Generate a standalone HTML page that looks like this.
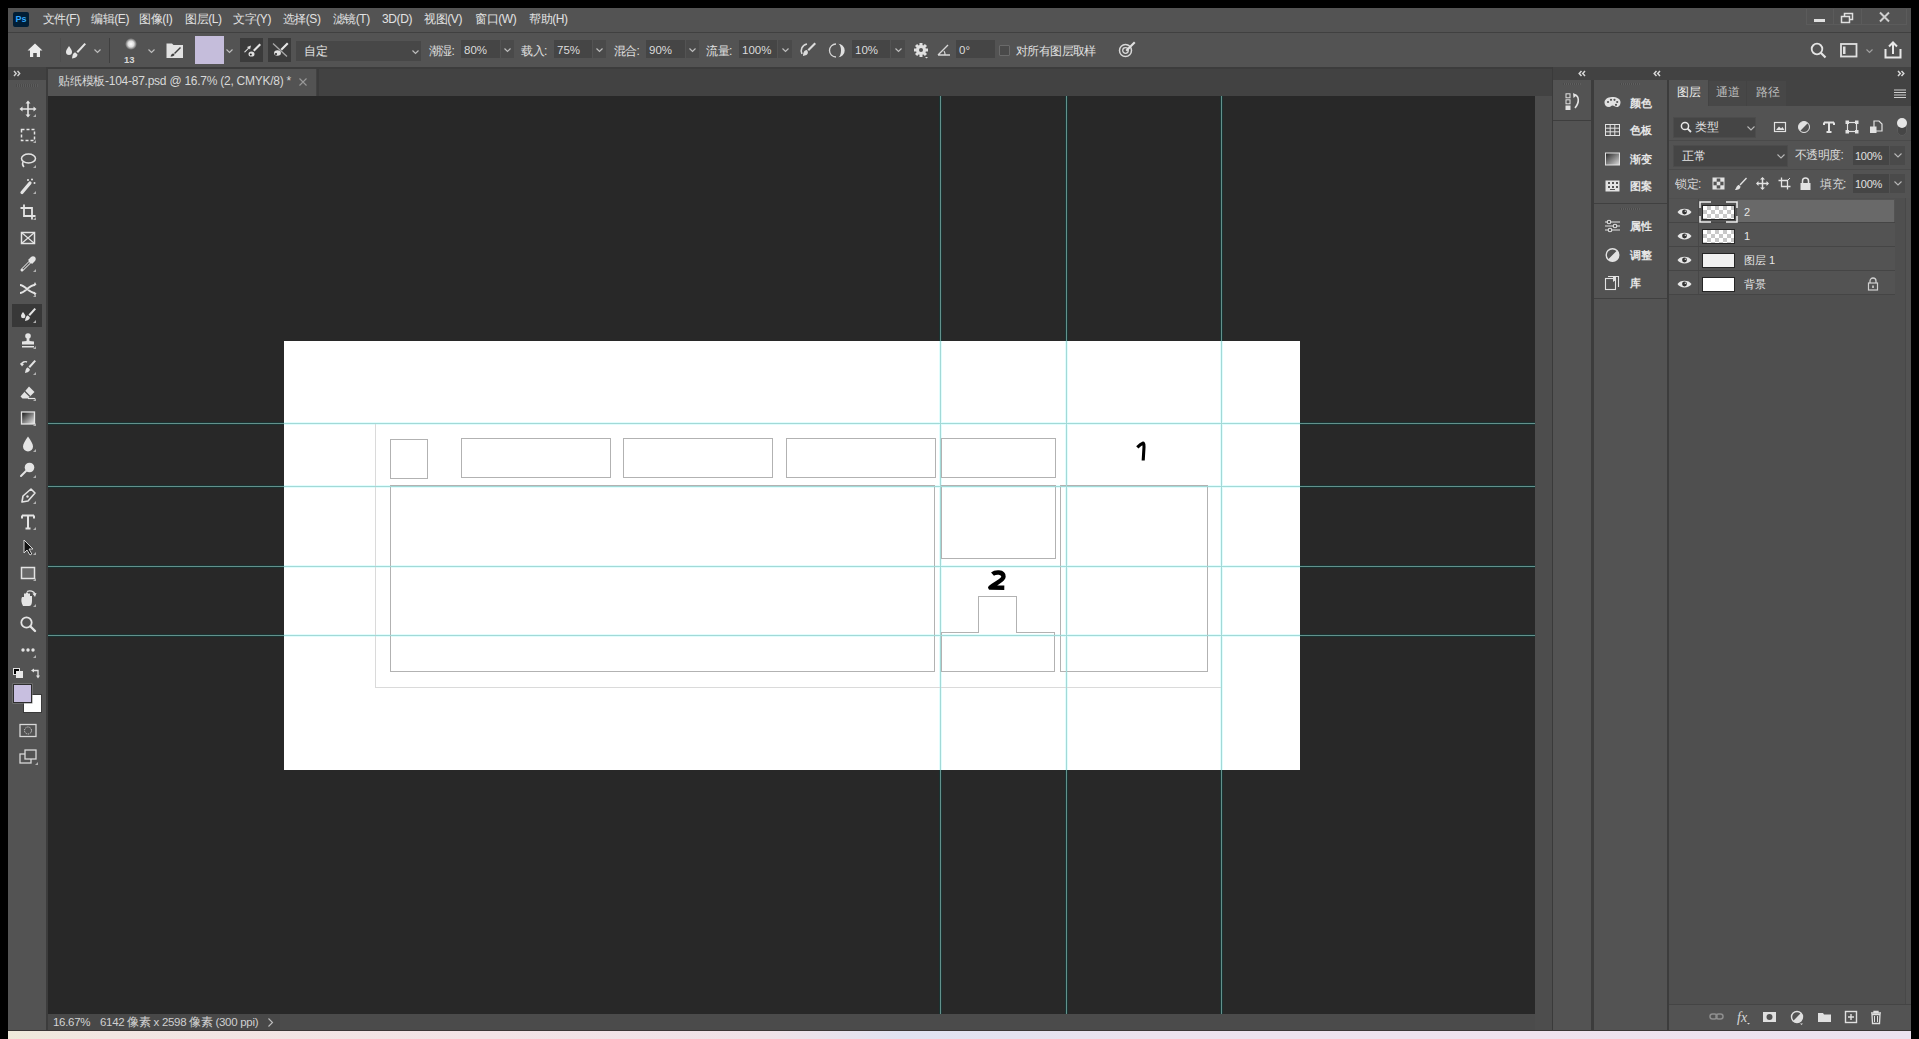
<!DOCTYPE html>
<html><head><meta charset="utf-8">
<style>
*{margin:0;padding:0;box-sizing:border-box}
html,body{width:1919px;height:1039px;overflow:hidden;background:#000;font-family:"Liberation Sans",sans-serif;color:#dcdcdc}
.a{position:absolute}
svg{position:absolute;overflow:visible}
.t{position:absolute;white-space:nowrap;font-size:12px;line-height:14px}
</style></head><body>
<!-- frame -->
<div class="a" style="left:8px;top:8px;width:1903px;height:1023px;background:#535353"></div>
<!-- bottom wallpaper strip -->
<div class="a" style="left:8px;top:1031px;width:1903px;height:8px;background:linear-gradient(90deg,#efeadb 0%,#f2e6e2 5%,#f3e3e6 25%,#f0e2e8 40%,#e0e2f1 47%,#e4e2f0 53%,#ece2ee 60%,#efe2ee 80%,#ebe2f0 100%)"></div>

<!-- menu bar -->
<div id="menubar" class="a" style="left:8px;top:8px;width:1903px;height:24px;background:#535353"></div>
<div class="a" style="left:8px;top:32px;width:1903px;height:1px;background:#404040"></div>
<!-- options bar -->
<div id="optbar" class="a" style="left:8px;top:33px;width:1903px;height:34px;background:#535353"></div>
<div class="a" style="left:8px;top:67px;width:1903px;height:2px;background:#3c3c3c"></div>

<!-- menu -->
<div class="a" style="left:13px;top:12px;width:16px;height:15px;background:#001e36;border-radius:2px;"></div><div class="t" style="left:14px;top:13px;width:14px;font-size:9px;line-height:13px;font-weight:bold;color:#31a8ff;text-align:center">Ps</div>
<div class="t" style="left:42.5px;top:12px;color:#e2e2e2;font-size:12px;letter-spacing:-0.4px">文件(F)</div>
<div class="t" style="left:91px;top:12px;color:#e2e2e2;font-size:12px;letter-spacing:-0.4px">编辑(E)</div>
<div class="t" style="left:139px;top:12px;color:#e2e2e2;font-size:12px;letter-spacing:-0.4px">图像(I)</div>
<div class="t" style="left:185px;top:12px;color:#e2e2e2;font-size:12px;letter-spacing:-0.4px">图层(L)</div>
<div class="t" style="left:233px;top:12px;color:#e2e2e2;font-size:12px;letter-spacing:-0.4px">文字(Y)</div>
<div class="t" style="left:282.5px;top:12px;color:#e2e2e2;font-size:12px;letter-spacing:-0.4px">选择(S)</div>
<div class="t" style="left:332.5px;top:12px;color:#e2e2e2;font-size:12px;letter-spacing:-0.4px">滤镜(T)</div>
<div class="t" style="left:382px;top:12px;color:#e2e2e2;font-size:12px;letter-spacing:-0.4px">3D(D)</div>
<div class="t" style="left:424px;top:12px;color:#e2e2e2;font-size:12px;letter-spacing:-0.4px">视图(V)</div>
<div class="t" style="left:475px;top:12px;color:#e2e2e2;font-size:12px;letter-spacing:-0.4px">窗口(W)</div>
<div class="t" style="left:529px;top:12px;color:#e2e2e2;font-size:12px;letter-spacing:-0.4px">帮助(H)</div>
<div class="a" style="left:1806px;top:9px;width:101px;height:16px;border:1px solid #5b5b5b;border-top:none"></div>
<div class="a" style="left:1833px;top:9px;width:1px;height:15px;background:#5b5b5b"></div>
<div class="a" style="left:1861px;top:9px;width:1px;height:15px;background:#5b5b5b"></div>
<div class="a" style="left:1814px;top:19px;width:11px;height:3px;background:#e0e0e0"></div>
<svg style="left:1840px;top:12px" width="14" height="12"><rect x="4.5" y="1.5" width="8" height="6" fill="none" stroke="#e0e0e0" stroke-width="1.5"/><rect x="1.5" y="4.5" width="8" height="6" fill="#535353" stroke="#e0e0e0" stroke-width="1.5"/></svg>
<svg style="left:1879px;top:12px" width="11" height="10"><path d="M1,0.5 L10,9.5 M10,0.5 L1,9.5" stroke="#d0d0d0" stroke-width="2"/></svg>
<!-- options bar -->
<svg style="left:27px;top:43px" width="16" height="15"><path d="M8,0.5 L15.5,7.5 L13,7.5 L13,14 L9.8,14 L9.8,10 L6.2,10 L6.2,14 L3,14 L3,7.5 L0.5,7.5 Z" fill="#ececec"/></svg>
<div class="a" style="left:60px;top:38px;width:1px;height:24px;background:#4d4d4d"></div>
<svg style="left:65px;top:42px" width="22" height="18"><path d="M4,4 C2,7 1,8.5 1,10 A3,3 0 0 0 7,10 C7,8.5 6,7 4,4Z" fill="#e6e6e6"/><path d="M19.5,1 L21,2.3 L13,11 L11.5,9.5 Z" fill="#e6e6e6"/><path d="M10.5,10.5 C8,10.5 7.5,13 7,16.5 C10,16 12.5,15 12.5,12.5 Z" fill="#e6e6e6"/></svg>
<svg style="left:94.0px;top:49px" width="7" height="4"><polyline points="0.5,0.5 3.5,3.5 6.5,0.5" fill="none" stroke="#bdbdbd" stroke-width="1.2"/></svg><div class="a" style="left:109px;top:38px;width:1px;height:25px;background:#3f3f3f"></div>
<div class="a" style="left:125px;top:38px;width:12px;height:12px;border-radius:50%;background:radial-gradient(circle,#ffffff 0%,#dddddd 35%,rgba(83,83,83,0) 70%)"></div>
<div class="t" style="left:124px;top:55px;font-size:9.5px;line-height:10px;color:#d8d8d8;font-weight:bold">13</div>
<svg style="left:147.5px;top:49px" width="7" height="4"><polyline points="0.5,0.5 3.5,3.5 6.5,0.5" fill="none" stroke="#bdbdbd" stroke-width="1.2"/></svg><svg style="left:166px;top:42px" width="18" height="17"><path d="M0.5,1.5 L6,1.5 L7.5,3 L17,3 L17,16 L0.5,16 Z" fill="#e2e2e2"/><path d="M14,5 L15,6 L9,12 L8,11Z" fill="#404040"/><path d="M7.5,11.5 C5.5,11.5 5,13 4.5,14.5 C6.5,14.5 8.5,14 8.5,12.5Z" fill="#404040"/></svg>
<div class="a" style="left:195px;top:36px;width:29px;height:28px;background:#c5bddb"></div>
<svg style="left:226.0px;top:49px" width="7" height="4"><polyline points="0.5,0.5 3.5,3.5 6.5,0.5" fill="none" stroke="#bdbdbd" stroke-width="1.2"/></svg><div class="a" style="left:240px;top:38px;width:23px;height:24px;background:#3b3b3b"></div>
<svg style="left:242px;top:42px" width="20" height="16"><path d="M2,10 L6,6 L5,5 L9,3.5 L8,7.5 L7,6.5 L3,10.5Z" fill="#e0e0e0"/><path d="M17.5,1.5 L19,3 L12.5,9.5 L11,8Z" fill="#e6e6e6"/><ellipse cx="9.5" cy="12" rx="3" ry="2.6" fill="#e0e0e0"/><circle cx="8.8" cy="12.5" r="1" fill="#222"/></svg>
<div class="a" style="left:268px;top:38px;width:23px;height:24px;background:#3b3b3b"></div>
<svg style="left:270px;top:42px" width="20" height="16"><path d="M3,1.5 L17,14.5" stroke="#a8a8a8" stroke-width="1.3"/><path d="M17,0.5 L18.5,2 L12,8.5 L10.5,7Z" fill="#e6e6e6"/><ellipse cx="7.5" cy="11" rx="3.4" ry="2.8" fill="#e0e0e0"/><circle cx="6" cy="12" r="1" fill="#222"/></svg>
<div class="a" style="left:296px;top:41px;width:125px;height:20px;background:#474747"></div>
<div class="t" style="left:304px;top:44px;color:#e4e4e4">自定</div>
<svg style="left:411.5px;top:49.5px" width="7" height="4"><polyline points="0.5,0.5 3.5,3.5 6.5,0.5" fill="none" stroke="#bdbdbd" stroke-width="1.2"/></svg><div class="t" style="left:428.5px;top:44px;color:#e0e0e0;letter-spacing:-0.5px">潮湿:</div>
<div class="a" style="left:461px;top:40px;width:39px;height:18px;background:#454545"></div>
<div class="a" style="left:501px;top:40px;width:13px;height:18px;background:#4a4a4a"></div>
<div class="t" style="left:464px;top:43px;color:#dcdcdc;font-size:11.5px">80%</div>
<svg style="left:504.0px;top:48px" width="7" height="4"><polyline points="0.5,0.5 3.5,3.5 6.5,0.5" fill="none" stroke="#bdbdbd" stroke-width="1.2"/></svg><div class="t" style="left:521px;top:44px;color:#e0e0e0;letter-spacing:-0.5px">载入:</div>
<div class="a" style="left:554px;top:40px;width:38px;height:18px;background:#454545"></div>
<div class="a" style="left:593px;top:40px;width:13px;height:18px;background:#4a4a4a"></div>
<div class="t" style="left:557px;top:43px;color:#dcdcdc;font-size:11.5px">75%</div>
<svg style="left:596.0px;top:48px" width="7" height="4"><polyline points="0.5,0.5 3.5,3.5 6.5,0.5" fill="none" stroke="#bdbdbd" stroke-width="1.2"/></svg><div class="t" style="left:613.5px;top:44px;color:#e0e0e0;letter-spacing:-0.5px">混合:</div>
<div class="a" style="left:646px;top:40px;width:39px;height:18px;background:#454545"></div>
<div class="a" style="left:686px;top:40px;width:13px;height:18px;background:#4a4a4a"></div>
<div class="t" style="left:649px;top:43px;color:#dcdcdc;font-size:11.5px">90%</div>
<svg style="left:689.0px;top:48px" width="7" height="4"><polyline points="0.5,0.5 3.5,3.5 6.5,0.5" fill="none" stroke="#bdbdbd" stroke-width="1.2"/></svg><div class="t" style="left:706px;top:44px;color:#e0e0e0;letter-spacing:-0.5px">流量:</div>
<div class="a" style="left:739px;top:40px;width:38px;height:18px;background:#454545"></div>
<div class="a" style="left:778px;top:40px;width:14px;height:18px;background:#4a4a4a"></div>
<div class="t" style="left:742px;top:43px;color:#dcdcdc;font-size:11.5px">100%</div>
<svg style="left:781.5px;top:48px" width="7" height="4"><polyline points="0.5,0.5 3.5,3.5 6.5,0.5" fill="none" stroke="#bdbdbd" stroke-width="1.2"/></svg><svg style="left:799px;top:42px" width="18" height="16"><path d="M3,12 C1,8 3,3 8,2" fill="none" stroke="#d8d8d8" stroke-width="1.6"/><path d="M15.5,0.5 L17,2 L10,9 L8.5,7.5Z" fill="#dcdcdc"/><path d="M8,8 C5,8 4,11 4,14 L7.5,13 C9,12 9.5,10 8,8Z" fill="#dcdcdc"/></svg>
<svg style="left:829px;top:43px" width="16" height="16"><path d="M7,1 A6.5,6.5 0 0 0 7,14" fill="none" stroke="#d8d8d8" stroke-width="1.3"/><path d="M9,0.8 A6.6,6.6 0 0 1 9,14.2 A2.6,5.8 0 0 0 9,0.8Z" fill="#e0e0e0"/></svg>
<div class="a" style="left:852px;top:40px;width:38px;height:18px;background:#454545"></div>
<div class="a" style="left:891px;top:40px;width:14px;height:18px;background:#4a4a4a"></div>
<div class="t" style="left:855px;top:43px;color:#dcdcdc;font-size:11.5px">10%</div>
<svg style="left:894.5px;top:48px" width="7" height="4"><polyline points="0.5,0.5 3.5,3.5 6.5,0.5" fill="none" stroke="#bdbdbd" stroke-width="1.2"/></svg><svg style="left:913px;top:42px" width="17" height="17"><g fill="#e0e0e0"><circle cx="8" cy="8" r="5"/><rect x="6.5" y="1" width="3" height="14"/><rect x="1" y="6.5" width="14" height="3"/><rect x="6.5" y="1" width="3" height="14" transform="rotate(45 8 8)"/><rect x="6.5" y="1" width="3" height="14" transform="rotate(-45 8 8)"/></g><circle cx="8" cy="8" r="2" fill="#535353"/><path d="M12,15 L15,15 L13.5,16.5Z" fill="#e0e0e0"/></svg>
<svg style="left:937px;top:43px" width="15" height="13"><path d="M1,12 L13,12 M1,12 L11,2" stroke="#d8d8d8" stroke-width="1.4" fill="none"/><path d="M7,8 A6,6 0 0 1 8,12" stroke="#d8d8d8" stroke-width="1.2" fill="none"/></svg>
<div class="a" style="left:956px;top:40px;width:39px;height:18px;background:#454545"></div>
<div class="t" style="left:959px;top:43px;color:#dcdcdc;font-size:11.5px">0°</div>
<div class="a" style="left:999px;top:45px;width:11px;height:11px;border:1px solid #6a6a6a;background:#4a4a4a;border-radius:1px"></div>
<div class="t" style="left:1016px;top:44px;color:#e0e0e0;letter-spacing:-0.6px">对所有图层取样</div>
<svg style="left:1118px;top:41px" width="18" height="17"><circle cx="7.5" cy="9.5" r="6" fill="none" stroke="#d8d8d8" stroke-width="1.5"/><circle cx="7.5" cy="9.5" r="2.8" fill="none" stroke="#d8d8d8" stroke-width="1.3"/><path d="M16,0.5 L17.5,2 L9,10.5 L7.5,9Z" fill="#e0e0e0"/></svg>
<svg style="left:1810px;top:42px" width="17" height="17"><circle cx="7" cy="7" r="5.3" fill="none" stroke="#e4e4e4" stroke-width="1.8"/><path d="M10.8,10.8 L15.5,15.5" stroke="#e4e4e4" stroke-width="2.2"/></svg>
<svg style="left:1840px;top:43px" width="18" height="15"><rect x="1" y="1" width="15.5" height="12.5" fill="none" stroke="#e0e0e0" stroke-width="1.8"/><rect x="3" y="3.5" width="2.5" height="7.5" fill="#e0e0e0"/></svg>
<svg style="left:1866.0px;top:49px" width="7" height="4"><polyline points="0.5,0.5 3.5,3.5 6.5,0.5" fill="none" stroke="#a0a0a0" stroke-width="1.2"/></svg><svg style="left:1884px;top:41px" width="18" height="18"><path d="M1.5,8 L1.5,16.5 L16.5,16.5 L16.5,8" fill="none" stroke="#e8e8e8" stroke-width="2"/><path d="M9,13 L9,2 M5,5.5 L9,1.5 L13,5.5" fill="none" stroke="#e8e8e8" stroke-width="2"/></svg>

<!-- toolbar -->
<div class="a" style="left:8px;top:67px;width:38px;height:964px;background:#535353"></div>
<div class="a" style="left:8px;top:67px;width:38px;height:13px;background:#424242"></div>
<div class="a" style="left:46px;top:67px;width:2px;height:964px;background:#3c3c3c"></div>

<!-- tab bar -->
<div class="a" style="left:48px;top:69px;width:1505px;height:27px;background:#424242"></div><div class="a" style="left:317px;top:69px;width:2px;height:27px;background:#3b3b3b"></div>
<div class="a" style="left:48px;top:69px;width:268px;height:27px;background:#535353"></div>

<!-- canvas -->
<div id="canvas" class="a" style="left:48px;top:96px;width:1487px;height:918px;background:#282828;overflow:hidden"></div>
<!-- status bar -->
<div class="a" style="left:48px;top:1014px;width:1487px;height:16px;background:#4b4b4b"></div><div class="a" style="left:48px;top:1014px;width:232px;height:16px;background:#484848"></div>
<!-- v scrollbar strip -->
<div class="a" style="left:1535px;top:96px;width:17px;height:934px;background:#4d4d4d"></div>
<div class="a" style="left:1552px;top:67px;width:1px;height:964px;background:#3a3a3a"></div>

<!-- toolbar icons -->
<div class="a" style="left:12px;top:304px;width:30px;height:23px;background:#383838"></div>
<svg style="left:19.0px;top:100.0px" width="18" height="18"><g stroke="#e4e4e4" stroke-width="1.6" fill="none"><path d="M9,2 V16 M2,9 H16"/></g><g fill="#e4e4e4"><path d="M9,0.5 L11.5,3.5 L6.5,3.5Z"/><path d="M9,17.5 L11.5,14.5 L6.5,14.5Z"/><path d="M0.5,9 L3.5,6.5 L3.5,11.5Z"/><path d="M17.5,9 L14.5,6.5 L14.5,11.5Z"/></g><path d="M17,14 L17,17 L14,17Z" fill="#b0b0b0"/></svg>
<svg style="left:19.0px;top:125.5px" width="18" height="18"><rect x="2.5" y="3.5" width="13" height="11" fill="none" stroke="#e4e4e4" stroke-width="1.5" stroke-dasharray="3 2"/><path d="M17,14 L17,17 L14,17Z" fill="#b0b0b0"/></svg>
<svg style="left:19.0px;top:151.0px" width="18" height="18"><ellipse cx="9.5" cy="7.5" rx="7" ry="4.5" fill="none" stroke="#e4e4e4" stroke-width="1.5"/><path d="M4,11 C3,13 4,15 5,16" fill="none" stroke="#e4e4e4" stroke-width="1.5"/><path d="M17,14 L17,17 L14,17Z" fill="#b0b0b0"/></svg>
<svg style="left:19.0px;top:177.0px" width="18" height="18"><path d="M3,15.5 L11,6" stroke="#e4e4e4" stroke-width="3.2" stroke-linecap="round"/><circle cx="13" cy="2.5" r="1" fill="#e4e4e4"/><circle cx="15.5" cy="6" r="1" fill="#e4e4e4"/><circle cx="9" cy="3" r="1" fill="#e4e4e4"/><path d="M17,14 L17,17 L14,17Z" fill="#b0b0b0"/></svg>
<svg style="left:19.0px;top:203.0px" width="18" height="18"><path d="M5,1.5 V13 H16.5 M1.5,5 H13 V16.5" fill="none" stroke="#e4e4e4" stroke-width="1.8"/><path d="M17,14 L17,17 L14,17Z" fill="#b0b0b0"/></svg>
<svg style="left:19.0px;top:229.0px" width="18" height="18"><rect x="2.5" y="3.5" width="13" height="11" fill="none" stroke="#e4e4e4" stroke-width="1.5"/><path d="M2.5,3.5 L15.5,14.5 M15.5,3.5 L2.5,14.5" stroke="#e4e4e4" stroke-width="1.2"/></svg>
<svg style="left:19.0px;top:255.0px" width="18" height="18"><path d="M3,15 L11,7" stroke="#e4e4e4" stroke-width="3" stroke-linecap="round" fill="none"/><path d="M3.8,14.2 L10.5,7.5" stroke="#535353" stroke-width="1.2"/><path d="M10,4 L14,8 M12,2 C13,1 15,1 16,2 C17,3 17,5 16,6 L13,9 L9,5Z" fill="#e4e4e4"/><path d="M17,14 L17,17 L14,17Z" fill="#b0b0b0"/></svg>
<svg style="left:19.0px;top:280.0px" width="18" height="18"><path d="M1,5 C6,5 10,13 16,13 M1,13 C6,13 10,5 16,5" fill="none" stroke="#e4e4e4" stroke-width="1.8"/><path d="M16,2 L17.5,5 L14,6Z M16,16 L17.5,13 L14,12Z" fill="#e4e4e4"/><path d="M17,14 L17,17 L14,17Z" fill="#b0b0b0"/></svg>
<svg style="left:19.0px;top:306.0px" width="18" height="18"><path d="M4,6 C2.5,8 2,9 2,10 A2.2,2.2 0 0 0 6.4,10 C6.4,9 5.5,8 4,6Z" fill="#e4e4e4"/><path d="M15.5,2 L17,3.3 L11,10 L9.5,8.5 Z" fill="#e4e4e4"/><path d="M9,9.5 C7,9.5 6.5,12 6,15 C8.5,14.5 11,13.5 10.8,11.3 Z" fill="#e4e4e4"/><path d="M17,14 L17,17 L14,17Z" fill="#b0b0b0"/></svg>
<svg style="left:19.0px;top:332.0px" width="18" height="18"><circle cx="9" cy="4" r="2.8" fill="#e4e4e4"/><path d="M7.8,6 L10.2,6 L10.5,9 L15,9.5 L15,12.5 L3,12.5 L3,9.5 L7.5,9Z" fill="#e4e4e4"/><rect x="3" y="14" width="12" height="1.5" fill="#e4e4e4"/><path d="M17,14 L17,17 L14,17Z" fill="#b0b0b0"/></svg>
<svg style="left:19.0px;top:358.0px" width="18" height="18"><path d="M15.5,2 L17,3.3 L11,10 L9.5,8.5 Z" fill="#e4e4e4"/><path d="M9,9.5 C7,9.5 6.5,12 6,15 C8.5,14.5 11,13.5 10.8,11.3 Z" fill="#e4e4e4"/><path d="M2,7 C3,4 6,3 8,4" fill="none" stroke="#e4e4e4" stroke-width="1.4"/><path d="M1,5 L3,8.5 L5,6Z" fill="#e4e4e4"/><path d="M17,14 L17,17 L14,17Z" fill="#b0b0b0"/></svg>
<svg style="left:19.0px;top:384.0px" width="18" height="18"><path d="M10,2.5 L15.5,8 L9,14.5 L3.5,14.5 L1.5,12.5 Z" fill="#e4e4e4"/><path d="M5.5,7 L11,12.5" stroke="#535353" stroke-width="1.2"/><path d="M9,14.5 H16" stroke="#e4e4e4" stroke-width="1.2"/><path d="M17,14 L17,17 L14,17Z" fill="#b0b0b0"/></svg>
<svg style="left:19.0px;top:409.0px" width="18" height="18"><defs><linearGradient id="gr" x1="0" x2="1" y1="0" y2="1"><stop offset="0" stop-color="#111"/><stop offset="1" stop-color="#eee"/></linearGradient></defs><rect x="2.5" y="3" width="13" height="12" fill="url(#gr)" stroke="#e4e4e4" stroke-width="1.3"/><path d="M17,14 L17,17 L14,17Z" fill="#b0b0b0"/></svg>
<svg style="left:19.0px;top:435.0px" width="18" height="18"><path d="M9,1.5 C6,6 4,9 4,11.5 A5,5 0 0 0 14,11.5 C14,9 12,6 9,1.5Z" fill="#e4e4e4"/><path d="M17,14 L17,17 L14,17Z" fill="#b0b0b0"/></svg>
<svg style="left:19.0px;top:461.0px" width="18" height="18"><circle cx="10.5" cy="6.5" r="4.8" fill="#e4e4e4"/><path d="M7,10 L2,15" stroke="#e4e4e4" stroke-width="2" stroke-linecap="round"/><path d="M17,14 L17,17 L14,17Z" fill="#b0b0b0"/></svg>
<svg style="left:19.0px;top:487.0px" width="18" height="18"><path d="M12,2 L16,6 L9,14 L3,15 L4,9Z" fill="none" stroke="#e4e4e4" stroke-width="1.6" stroke-linejoin="round"/><circle cx="8.5" cy="9.5" r="1.2" fill="#e4e4e4"/><path d="M17,14 L17,17 L14,17Z" fill="#b0b0b0"/></svg>
<svg style="left:19.0px;top:513.0px" width="18" height="18"><path d="M3,2.5 H15 M9,2.5 V15.5 M6.5,15.5 H11.5 M3,2.5 V5.5 M15,2.5 V5.5" fill="none" stroke="#e4e4e4" stroke-width="2"/><path d="M17,14 L17,17 L14,17Z" fill="#b0b0b0"/></svg>
<svg style="left:19.0px;top:538.0px" width="18" height="18"><path d="M5,2 L5,15 L8,12 L11,17 L12.8,16 L10,11 L14,11Z" fill="#111" stroke="#e4e4e4" stroke-width="0.9"/><path d="M17,14 L17,17 L14,17Z" fill="#b0b0b0"/></svg>
<svg style="left:19.0px;top:564.0px" width="18" height="18"><rect x="2.5" y="3.5" width="13" height="11" fill="#6a6a6a" stroke="#e4e4e4" stroke-width="1.5"/><path d="M17,14 L17,17 L14,17Z" fill="#b0b0b0"/></svg>
<svg style="left:19.0px;top:590.0px" width="18" height="18"><path d="M4,16 C2,13 2,9 3,7 L5,7 L5,3.5 L7,3.5 L7,2.5 L9,2.5 L9,3.5 L11,3.5 L11,6 L13,6 L13,11 C13,14 12,16 10,16Z" fill="#e4e4e4"/><path d="M8,1.5 C11,0 15,1 16,4" fill="none" stroke="#e4e4e4" stroke-width="1.3"/><path d="M16,7 L17.5,3 L13.5,3.5Z" fill="#e4e4e4"/><path d="M17,14 L17,17 L14,17Z" fill="#b0b0b0"/></svg>
<svg style="left:19.0px;top:615.0px" width="18" height="18"><circle cx="7.5" cy="7.5" r="5.2" fill="none" stroke="#e4e4e4" stroke-width="1.8"/><path d="M11.5,11.5 L16,16" stroke="#e4e4e4" stroke-width="2.4" stroke-linecap="round"/></svg>
<svg style="left:19.0px;top:641.0px" width="18" height="18"><circle cx="4" cy="9" r="1.7" fill="#e4e4e4"/><circle cx="9" cy="9" r="1.7" fill="#e4e4e4"/><circle cx="14" cy="9" r="1.7" fill="#e4e4e4"/><path d="M17,14 L17,17 L14,17Z" fill="#b0b0b0"/></svg>
<svg style="left:13px;top:668px" width="30" height="14"><rect x="0.5" y="0.5" width="6" height="6" fill="#000" stroke="#e0e0e0" stroke-width="1"/><rect x="3.5" y="3.5" width="6" height="6" fill="#e8e8e8" stroke="#e8e8e8"/><path d="M20,2.5 H25 V8" fill="none" stroke="#e0e0e0" stroke-width="1.3"/><path d="M18,2.5 L21,0.5 L21,4.5Z M25,10.5 L23,7.5 L27,7.5Z" fill="#e0e0e0"/></svg>
<div class="a" style="left:23px;top:694px;width:19px;height:19px;background:#fff;border:1px solid #3a3a3a"></div>
<div class="a" style="left:13px;top:684px;width:19px;height:19px;background:#c8bfe0;border:1px solid #2e2e2e;box-shadow:0 0 0 0.5px #888"></div>
<svg style="left:19px;top:723px" width="18" height="16"><rect x="1" y="1.5" width="16" height="12" fill="none" stroke="#d8d8d8" stroke-width="1.3"/><circle cx="9" cy="7.5" r="3.5" fill="none" stroke="#d8d8d8" stroke-width="1" stroke-dasharray="1.2 1"/></svg>
<svg style="left:19px;top:749px" width="20" height="17"><rect x="1" y="5" width="11" height="9" fill="none" stroke="#d8d8d8" stroke-width="1.3"/><rect x="6" y="1" width="11" height="9" fill="#535353" stroke="#d8d8d8" stroke-width="1.3"/><path d="M19,13 L19,16 L16,16Z" fill="#b0b0b0"/></svg>
<!-- tab text -->
<div class="t" style="left:58px;top:74px;color:#d8d8d8;font-size:12px;letter-spacing:-0.25px">贴纸模板-104-87.psd @ 16.7% (2, CMYK/8) *</div>
<svg style="left:299px;top:78px" width="8" height="8"><path d="M0.5,0.5 L7.5,7.5 M7.5,0.5 L0.5,7.5" stroke="#9a9a9a" stroke-width="1.1"/></svg>
<svg style="left:13px;top:70px" width="9" height="7"><path d="M1,1 L3.2,3.5 L1,6 M4.5,1 L6.7,3.5 L4.5,6" fill="none" stroke="#d0d0d0" stroke-width="1.4"/></svg>
<div class="a" style="left:16px;top:84px;width:22px;height:3px;background:repeating-linear-gradient(90deg,#4a4a4a 0 1px,#5c5c5c 1px 2px)"></div>
<!-- status bar -->
<div class="t" style="left:53px;top:1015px;color:#d4d4d4;font-size:11.5px;line-height:14px;letter-spacing:-0.3px">16.67%</div>
<div class="t" style="left:100px;top:1015px;color:#d0d0d0;font-size:11.5px;line-height:14px;letter-spacing:-0.3px">6142 像素 x 2598 像素 (300 ppi)</div>
<svg style="left:268px;top:1018px" width="6" height="9"><path d="M0.5,0.5 L4.5,4.5 L0.5,8.5" fill="none" stroke="#bdbdbd" stroke-width="1.1"/></svg>

<!-- right columns -->
<div class="a" style="left:1553px;top:67px;width:358px;height:13px;background:#424242"></div>
<div class="a" style="left:1553px;top:80px;width:38px;height:951px;background:#535353"></div>
<div class="a" style="left:1591px;top:80px;width:3px;height:951px;background:#3c3c3c"></div>
<div class="a" style="left:1594px;top:80px;width:73px;height:951px;background:#535353"></div>
<div class="a" style="left:1667px;top:80px;width:2px;height:951px;background:#3c3c3c"></div>
<div class="a" style="left:1669px;top:80px;width:242px;height:951px;background:#535353"></div>


<!-- canvas content -->
<svg class="a" style="left:0;top:0" width="1919" height="1039" shape-rendering="crispEdges">
<defs><clipPath id="docclip"><rect x="284" y="341" width="1016" height="429"/></clipPath></defs>
 <g fill="#1a3332">
  <rect x="48" y="422" width="1487" height="3"/>
  <rect x="48" y="485" width="1487" height="3"/>
  <rect x="48" y="565" width="1487" height="3"/>
  <rect x="48" y="634" width="1487" height="3"/>
  <rect x="939" y="96" width="3" height="918"/>
  <rect x="1065" y="96" width="3" height="918"/>
  <rect x="1220" y="96" width="3" height="918"/>
 </g>
 <g fill="#63918c">
  <rect x="48" y="423" width="1487" height="1"/>
  <rect x="48" y="486" width="1487" height="1"/>
  <rect x="48" y="566" width="1487" height="1"/>
  <rect x="48" y="635" width="1487" height="1"/>
  <rect x="940" y="96" width="1" height="918"/>
  <rect x="1066" y="96" width="1" height="918"/>
  <rect x="1221" y="96" width="1" height="918"/>
 </g>
 <rect x="284" y="341" width="1016" height="429" fill="#fff"/>
 <g clip-path="url(#docclip)"><g>
 <g fill="#e2fdfd">
  <rect x="48" y="422" width="1487" height="3"/>
  <rect x="48" y="485" width="1487" height="3"/>
  <rect x="48" y="565" width="1487" height="3"/>
  <rect x="48" y="634" width="1487" height="3"/>
  <rect x="939" y="96" width="3" height="918"/>
  <rect x="1065" y="96" width="3" height="918"/>
  <rect x="1220" y="96" width="3" height="918"/>
 </g>
 </g></g>
 <g fill="none" stroke="#dadada" stroke-width="1">
  <rect x="375.5" y="423.5" width="846" height="264"/>
 </g>
 <g fill="none" stroke="#b2b2b2" stroke-width="1">
  <rect x="390.5" y="439.5" width="37" height="39"/>
  <rect x="461.5" y="438.5" width="149" height="39"/>
  <rect x="623.5" y="438.5" width="149" height="39"/>
  <rect x="786.5" y="438.5" width="149" height="39"/>
  <rect x="941.5" y="438.5" width="114" height="39"/>
  <rect x="390.5" y="485.5" width="544" height="186"/>
  <rect x="941.5" y="485.5" width="114" height="73"/>
  <path d="M941.5,671.5 V632.5 H978.5 V596.5 H1016.5 V632.5 H1054.5 V671.5 Z"/>
  <rect x="1060.5" y="485.5" width="147" height="186"/>
 </g>
 <g clip-path="url(#docclip)"><g>
 <g fill="#a2d9d7">
  <rect x="48" y="423" width="1487" height="1"/>
  <rect x="48" y="486" width="1487" height="1"/>
  <rect x="48" y="566" width="1487" height="1"/>
  <rect x="48" y="635" width="1487" height="1"/>
  <rect x="940" y="96" width="1" height="918"/>
  <rect x="1066" y="96" width="1" height="918"/>
  <rect x="1221" y="96" width="1" height="918"/>
 </g>
 </g></g>
</svg>
<svg class="a" style="left:0;top:0" width="1919" height="1039">
 <path d="M1137.3,447.3 Q1140.5,444 1143.3,443 Q1144.2,444 1144,447 L1143.2,460.5" fill="none" stroke="#000" stroke-width="3.1" stroke-linejoin="round" stroke-linecap="butt"/>
 <path d="M992.5,574.2 C995,572 1003.5,571 1003.5,576.8 C1003.5,580.5 995,583 990.3,587.6 L1004.3,587.8" fill="none" stroke="#000" stroke-width="4.4" stroke-linejoin="round"/>
</svg>
<!-- right panel content -->
<svg style="left:1577.5px;top:70.0px" width="9" height="7"><path d="M3.5,1 L1.2,3.5 L3.5,6 M7,1 L4.7,3.5 L7,6" fill="none" stroke="#d8d8d8" stroke-width="1.5"/></svg>
<svg style="left:1652.5px;top:70.0px" width="9" height="7"><path d="M3.5,1 L1.2,3.5 L3.5,6 M7,1 L4.7,3.5 L7,6" fill="none" stroke="#d8d8d8" stroke-width="1.5"/></svg>
<svg style="left:1896.5px;top:70.0px" width="9" height="7"><path d="M1,1 L3.3,3.5 L1,6 M4.5,1 L6.8,3.5 L4.5,6" fill="none" stroke="#d8d8d8" stroke-width="1.5"/></svg>
<div class="a" style="left:1553px;top:120px;width:38px;height:1px;background:#3e3e3e"></div>
<div class="a" style="left:1563px;top:83px;width:18px;height:2px;background:repeating-linear-gradient(90deg,#4a4a4a 0 1px,#5e5e5e 1px 2px)"></div>
<svg style="left:1565px;top:93px" width="18" height="18"><rect x="1" y="0.8" width="4" height="4" fill="none" stroke="#e2e2e2" stroke-width="1"/><rect x="1" y="6.8" width="4" height="4" fill="none" stroke="#e2e2e2" stroke-width="1"/><rect x="0.5" y="12.5" width="5" height="4.5" fill="#e2e2e2"/><path d="M9,2 C14,2 15,9 10,15" fill="none" stroke="#e2e2e2" stroke-width="1.6"/><path d="M8,0 L12,2 L8.5,5Z" fill="#e2e2e2"/></svg>
<div class="a" style="left:1594px;top:203px;width:73px;height:1px;background:#404040"></div>
<div class="a" style="left:1620px;top:83px;width:20px;height:2px;background:repeating-linear-gradient(90deg,#4a4a4a 0 1px,#5e5e5e 1px 2px)"></div>
<div class="a" style="left:1620px;top:208px;width:20px;height:2px;background:repeating-linear-gradient(90deg,#4a4a4a 0 1px,#5e5e5e 1px 2px)"></div>
<svg style="left:1604px;top:95.7px" width="18" height="15"><path d="M8,1 C3,1 0.5,4 0.5,6.5 C0.5,9 2,11 5,11 C7,11 7,9.5 8.5,9.5 C10,9.5 11,11 13,11 C15.5,11 16.5,8.5 16.5,6 C16.5,3 13,1 8,1Z" fill="#e2e2e2"/><g fill="#535353"><circle cx="4" cy="6" r="1.1"/><circle cx="7" cy="3.8" r="1.1"/><circle cx="10.5" cy="3.8" r="1.1"/><circle cx="13.2" cy="6" r="1.1"/><circle cx="12" cy="8.8" r="1.1"/></g></svg>
<div class="t" style="left:1630px;top:95.7px;color:#e6e6e6;font-size:11px;line-height:14px;font-weight:bold;letter-spacing:-0.3px">颜色</div>
<svg style="left:1604px;top:123.4px" width="18" height="15"><g fill="none" stroke="#e2e2e2" stroke-width="1"><rect x="1.5" y="1.5" width="14" height="11"/><path d="M1.5,5.2 H15.5 M1.5,8.8 H15.5 M6.2,1.5 V12.5 M10.8,1.5 V12.5"/></g></svg>
<div class="t" style="left:1630px;top:123.4px;color:#e6e6e6;font-size:11px;line-height:14px;font-weight:bold;letter-spacing:-0.3px">色板</div>
<svg style="left:1604px;top:151.8px" width="18" height="15"><defs><linearGradient id="g2" x1="0" x2="1" y1="0" y2="1"><stop offset="0" stop-color="#222"/><stop offset="1" stop-color="#ddd"/></linearGradient></defs><rect x="1.5" y="1" width="14" height="12" fill="url(#g2)" stroke="#e2e2e2" stroke-width="1"/></svg>
<div class="t" style="left:1630px;top:151.8px;color:#e6e6e6;font-size:11px;line-height:14px;font-weight:bold;letter-spacing:-0.3px">渐变</div>
<svg style="left:1604px;top:178.9px" width="18" height="15"><rect x="1.5" y="1.5" width="14" height="11" fill="#e2e2e2"/><g fill="#535353"><rect x="4" y="3" width="2" height="2"/><rect x="8" y="3" width="2" height="2"/><rect x="12" y="3" width="2" height="2"/><rect x="4" y="7" width="2" height="2"/><rect x="8" y="7" width="2" height="2"/><rect x="12" y="7" width="2" height="2"/><rect x="6" y="10" width="5" height="1"/></g></svg>
<div class="t" style="left:1630px;top:178.9px;color:#e6e6e6;font-size:11px;line-height:14px;font-weight:bold;letter-spacing:-0.3px">图案</div>
<svg style="left:1604px;top:219.3px" width="18" height="15"><g stroke="#e2e2e2" stroke-width="1.1" fill="#535353"><path d="M1,3 H16 M1,7 H16 M1,11 H16"/><circle cx="5" cy="3" r="1.8"/><circle cx="11" cy="7" r="1.8"/><circle cx="6" cy="11" r="1.8"/></g></svg>
<div class="t" style="left:1630px;top:219.3px;color:#e6e6e6;font-size:11px;line-height:14px;font-weight:bold;letter-spacing:-0.3px">属性</div>
<svg style="left:1604px;top:248px" width="18" height="15"><circle cx="8.5" cy="7" r="6.3" fill="none" stroke="#e2e2e2" stroke-width="1.4"/><path d="M13,2.5 A6.3,6.3 0 0 1 4,11.5Z" fill="#e2e2e2"/></svg>
<div class="t" style="left:1630px;top:248px;color:#e6e6e6;font-size:11px;line-height:14px;font-weight:bold;letter-spacing:-0.3px">调整</div>
<svg style="left:1604px;top:275.9px" width="18" height="15"><g fill="none" stroke="#e2e2e2" stroke-width="1.1"><rect x="1.5" y="2.5" width="10" height="11"/><path d="M4,0.5 H14.5 V11"/></g><path d="M9,0.8 H12 V6 L10.5,4.8 L9,6Z" fill="#e2e2e2"/></svg>
<div class="t" style="left:1630px;top:275.9px;color:#e6e6e6;font-size:11px;line-height:14px;font-weight:bold;letter-spacing:-0.3px">库</div>
<div class="a" style="left:1594px;top:298px;width:73px;height:1px;background:#404040"></div>
<!-- layers panel -->
<div class="a" style="left:1669px;top:80px;width:242px;height:26px;background:#434343"></div>
<div class="a" style="left:1669px;top:80px;width:39px;height:26px;background:#535353"></div>
<div class="a" style="left:1709px;top:81px;width:37px;height:25px;background:#474747"></div>
<div class="a" style="left:1747px;top:81px;width:39px;height:25px;background:#474747"></div>
<div class="t" style="left:1677px;top:85px;color:#ececec;font-size:12px">图层</div>
<div class="t" style="left:1716px;top:85px;color:#bdbdbd;font-size:12px">通道</div>
<div class="t" style="left:1756px;top:85px;color:#bdbdbd;font-size:12px">路径</div>
<svg style="left:1894px;top:89px" width="12" height="9"><path d="M0,1 H12 M0,3.5 H12 M0,6 H12 M0,8.5 H12" stroke="#cfcfcf" stroke-width="1"/></svg>
<div class="a" style="left:1673px;top:117px;width:83px;height:21px;background:#454545;border:1px solid #4c4c4c"></div>
<svg style="left:1680px;top:121px" width="12" height="12"><circle cx="5" cy="5" r="3.6" fill="none" stroke="#e8e8e8" stroke-width="1.5"/><path d="M7.6,7.6 L11,11" stroke="#e8e8e8" stroke-width="1.8"/></svg>
<div class="t" style="left:1695px;top:120px;color:#e2e2e2;font-size:12px">类型</div>
<svg style="left:1747px;top:126px" width="8" height="5"><polyline points="0.5,0.5 4,4 7.5,0.5" fill="none" stroke="#b8b8b8" stroke-width="1.1"/></svg>
<svg style="left:1772.5px;top:120px" width="14" height="14"><rect x="1.5" y="2.5" width="11" height="9" fill="none" stroke="#e2e2e2" stroke-width="1.2"/><path d="M3,10 L6,6.5 L8,8.5 L9.5,7 L11.5,10Z" fill="#e2e2e2"/></svg>
<svg style="left:1797.3px;top:120px" width="14" height="14"><circle cx="7" cy="7" r="5.5" fill="#e2e2e2"/><path d="M10.9,3.1 A5.5,5.5 0 0 1 3.1,10.9Z" fill="#535353"/><circle cx="7" cy="7" r="5.5" fill="none" stroke="#e2e2e2" stroke-width="1"/></svg>
<svg style="left:1821.7px;top:120px" width="14" height="14"><path d="M2,2.5 H12 M7,2.5 V12 M4.5,12 H9.5 M2,2.5 V5 M12,2.5 V5" fill="none" stroke="#e2e2e2" stroke-width="2"/></svg>
<svg style="left:1845px;top:120px" width="14" height="14"><rect x="2.5" y="2.5" width="9" height="9" fill="none" stroke="#e2e2e2" stroke-width="1.2"/><g fill="#e2e2e2"><rect x="0.5" y="0.5" width="3.5" height="3.5"/><rect x="10" y="0.5" width="3.5" height="3.5"/><rect x="0.5" y="10" width="3.5" height="3.5"/><rect x="10" y="10" width="3.5" height="3.5"/></g></svg>
<svg style="left:1868.8px;top:120px" width="14" height="14"><path d="M5,1 H10 L13,4 V11 H5Z" fill="none" stroke="#e2e2e2" stroke-width="1.2"/><rect x="1" y="6.5" width="6.5" height="6.5" fill="#e2e2e2"/></svg>
<div class="a" style="left:1897px;top:118px;width:10px;height:18px;border-radius:5px;background:#464646;border:1px solid #5a5a5a"></div><div class="a" style="left:1897px;top:118px;width:10px;height:10px;border-radius:50%;background:#e6e6e6"></div>
<div class="a" style="left:1669px;top:140px;width:242px;height:1px;background:#4a4a4a"></div>
<div class="a" style="left:1673px;top:145px;width:115px;height:22px;background:#454545;border:1px solid #4c4c4c"></div>
<div class="t" style="left:1682px;top:149px;color:#e6e6e6;font-size:12px">正常</div>
<svg style="left:1777px;top:154px" width="8" height="5"><polyline points="0.5,0.5 4,4 7.5,0.5" fill="none" stroke="#b8b8b8" stroke-width="1.1"/></svg>
<div class="t" style="left:1795px;top:148px;color:#dcdcdc;font-size:12px;letter-spacing:-0.6px">不透明度:</div>
<div class="a" style="left:1853px;top:146px;width:36px;height:19px;background:#454545"></div>
<div class="a" style="left:1890px;top:146px;width:15px;height:19px;background:#4a4a4a"></div>
<div class="t" style="left:1855px;top:149px;color:#e0e0e0;font-size:11px;letter-spacing:-0.3px">100%</div>
<svg style="left:1894px;top:153px" width="8" height="5"><polyline points="0.5,0.5 4,4 7.5,0.5" fill="none" stroke="#b8b8b8" stroke-width="1.1"/></svg>
<div class="a" style="left:1669px;top:169px;width:242px;height:1px;background:#4a4a4a"></div>
<div class="t" style="left:1675px;top:177px;color:#d8d8d8;font-size:12px;letter-spacing:-0.5px">锁定:</div>
<svg style="left:1711.7px;top:177px" width="13" height="14"><rect x="1" y="1" width="11" height="11" fill="none" stroke="#e2e2e2" stroke-width="1"/><g fill="#e2e2e2"><rect x="1" y="1" width="3.7" height="3.7"/><rect x="8.3" y="1" width="3.7" height="3.7"/><rect x="4.7" y="4.7" width="3.6" height="3.6"/><rect x="1" y="8.3" width="3.7" height="3.7"/><rect x="8.3" y="8.3" width="3.7" height="3.7"/></g></svg>
<svg style="left:1734.3px;top:177px" width="13" height="14"><path d="M12,0.5 L13,1.5 L6.5,8.5 L5.5,7.5Z" fill="#e2e2e2"/><path d="M5,8 C3,8 2.5,10.5 1,13 C4,13 6.5,12 6.5,9.5Z" fill="#e2e2e2"/></svg>
<svg style="left:1755.5px;top:177px" width="13" height="14"><path d="M6.5,1 V12 M1,6.5 H12" stroke="#e2e2e2" stroke-width="1.5"/><g fill="#e2e2e2"><path d="M6.5,0 L9,2.5 L4,2.5Z"/><path d="M6.5,13 L9,10.5 L4,10.5Z"/><path d="M0,6.5 L2.5,4 L2.5,9Z"/><path d="M13,6.5 L10.5,4 L10.5,9Z"/></g></svg>
<svg style="left:1777.5px;top:177px" width="13" height="14"><path d="M3.5,0.5 V9.5 H12.5 M0.5,3.5 H9.5 V12.5" fill="none" stroke="#e2e2e2" stroke-width="1.3"/><path d="M9,4 L12,1" stroke="#e2e2e2" stroke-width="1"/></svg>
<svg style="left:1799.3px;top:177px" width="13" height="14"><path d="M3.5,6 V4 A3,3 0 0 1 9.5,4 V6" fill="none" stroke="#e2e2e2" stroke-width="1.5"/><rect x="1.5" y="6" width="10" height="7" fill="#e2e2e2"/></svg>
<div class="t" style="left:1820px;top:177px;color:#d8d8d8;font-size:12px;letter-spacing:-0.5px">填充:</div>
<div class="a" style="left:1853px;top:174px;width:36px;height:19px;background:#454545"></div>
<div class="a" style="left:1890px;top:174px;width:15px;height:19px;background:#4a4a4a"></div>
<div class="t" style="left:1855px;top:177px;color:#e0e0e0;font-size:11px;letter-spacing:-0.3px">100%</div>
<svg style="left:1894px;top:181px" width="8" height="5"><polyline points="0.5,0.5 4,4 7.5,0.5" fill="none" stroke="#b8b8b8" stroke-width="1.1"/></svg>
<div class="a" style="left:1669px;top:198px;width:242px;height:806px;background:#4f4f4f"></div>
<div class="a" style="left:1905px;top:198px;width:6px;height:806px;background:#525252;border-left:1px solid #484848"></div>
<div class="a" style="left:1669px;top:199px;width:226px;height:23px;background:#535353"></div>
<div class="a" style="left:1737px;top:200px;width:157px;height:22px;background:#696969"></div>
<div class="a" style="left:1669px;top:222px;width:226px;height:1px;background:#454545"></div>
<div class="a" style="left:1698px;top:199px;width:1px;height:23px;background:#484848"></div>
<svg style="left:1677px;top:207px" width="15" height="10"><path d="M0.5,5 C3,0.5 12,0.5 14.5,5 C12,9.5 3,9.5 0.5,5Z" fill="#e8e8e8"/><circle cx="7.5" cy="5" r="2.4" fill="#333"/><circle cx="8.3" cy="4.2" r="0.7" fill="#ddd"/></svg>
<div class="a" style="left:1702px;top:205px;width:33px;height:15px;border:1px solid #262626;background-color:#fff;background-image:linear-gradient(45deg,#c8c8c8 25%,transparent 25%,transparent 75%,#c8c8c8 75%),linear-gradient(45deg,#c8c8c8 25%,transparent 25%,transparent 75%,#c8c8c8 75%);background-size:8px 8px;background-position:0 0,4px 4px"></div>
<svg style="left:1699px;top:201px" width="39" height="22"><path d="M1,7 V1 H12 M27,1 H38 V7 M1,15 V21 H12 M27,21 H38 V15" fill="none" stroke="#f0f0f0" stroke-width="1.5"/></svg>
<div class="t" style="left:1744px;top:205px;color:#e6e6e6;font-size:11px;line-height:14px">2</div>
<div class="a" style="left:1669px;top:223px;width:226px;height:23px;background:#535353"></div>
<div class="a" style="left:1669px;top:246px;width:226px;height:1px;background:#454545"></div>
<div class="a" style="left:1698px;top:223px;width:1px;height:23px;background:#484848"></div>
<svg style="left:1677px;top:231px" width="15" height="10"><path d="M0.5,5 C3,0.5 12,0.5 14.5,5 C12,9.5 3,9.5 0.5,5Z" fill="#e8e8e8"/><circle cx="7.5" cy="5" r="2.4" fill="#333"/><circle cx="8.3" cy="4.2" r="0.7" fill="#ddd"/></svg>
<div class="a" style="left:1702px;top:229px;width:33px;height:15px;border:1px solid #262626;background-color:#fff;background-image:linear-gradient(45deg,#c8c8c8 25%,transparent 25%,transparent 75%,#c8c8c8 75%),linear-gradient(45deg,#c8c8c8 25%,transparent 25%,transparent 75%,#c8c8c8 75%);background-size:8px 8px;background-position:0 0,4px 4px"></div>
<div class="t" style="left:1744px;top:229px;color:#e6e6e6;font-size:11px;line-height:14px">1</div>
<div class="a" style="left:1669px;top:247px;width:226px;height:23px;background:#535353"></div>
<div class="a" style="left:1669px;top:270px;width:226px;height:1px;background:#454545"></div>
<div class="a" style="left:1698px;top:247px;width:1px;height:23px;background:#484848"></div>
<svg style="left:1677px;top:255px" width="15" height="10"><path d="M0.5,5 C3,0.5 12,0.5 14.5,5 C12,9.5 3,9.5 0.5,5Z" fill="#e8e8e8"/><circle cx="7.5" cy="5" r="2.4" fill="#333"/><circle cx="8.3" cy="4.2" r="0.7" fill="#ddd"/></svg>
<div class="a" style="left:1702px;top:253px;width:33px;height:15px;border:1px solid #262626;background:#f2f2f2"></div>
<div class="t" style="left:1744px;top:253px;color:#e6e6e6;font-size:11px;line-height:14px">图层 1</div>
<div class="a" style="left:1669px;top:271px;width:226px;height:23px;background:#535353"></div>
<div class="a" style="left:1669px;top:294px;width:226px;height:1px;background:#454545"></div>
<div class="a" style="left:1698px;top:271px;width:1px;height:23px;background:#484848"></div>
<svg style="left:1677px;top:279px" width="15" height="10"><path d="M0.5,5 C3,0.5 12,0.5 14.5,5 C12,9.5 3,9.5 0.5,5Z" fill="#e8e8e8"/><circle cx="7.5" cy="5" r="2.4" fill="#333"/><circle cx="8.3" cy="4.2" r="0.7" fill="#ddd"/></svg>
<div class="a" style="left:1702px;top:277px;width:33px;height:15px;border:1px solid #262626;background:#fff"></div>
<div class="t" style="left:1744px;top:277px;color:#e6e6e6;font-size:11px;line-height:14px">背景</div>
<svg style="left:1867px;top:277px" width="12" height="14"><path d="M3,6 V4 A3,3 0 0 1 9,4 V6" fill="none" stroke="#d0d0d0" stroke-width="1.3"/><rect x="1.5" y="6" width="9" height="7" fill="none" stroke="#d0d0d0" stroke-width="1.2"/><rect x="5.2" y="8.5" width="1.6" height="2.5" fill="#d0d0d0"/></svg>
<div class="a" style="left:1669px;top:1004px;width:242px;height:1px;background:#444"></div>
<svg style="left:1709px;top:1010px" width="15" height="16"><g fill="none" stroke="#8e8e8e" stroke-width="1.5"><rect x="1" y="4" width="7" height="5" rx="2.5"/><rect x="7" y="4" width="7" height="5" rx="2.5"/></g></svg>
<svg style="left:1736px;top:1010px" width="15" height="16"><text x="1" y="12" font-family="Liberation Serif" font-style="italic" font-size="14" fill="#d8d8d8">fx</text><path d="M11,13 L14,13 L12.5,14.5Z" fill="#ddd"/></svg>
<svg style="left:1762px;top:1010px" width="15" height="16"><rect x="1" y="2" width="13" height="10" fill="#e0e0e0"/><circle cx="7.5" cy="7" r="3" fill="#535353"/></svg>
<svg style="left:1790px;top:1010px" width="15" height="16"><circle cx="7" cy="7" r="5.5" fill="none" stroke="#e0e0e0" stroke-width="1.4"/><path d="M10.9,3.1 A5.5,5.5 0 0 1 3.1,10.9Z" fill="#e0e0e0"/><path d="M10,13.5 L13,13.5 L11.5,15Z" fill="#ddd"/></svg>
<svg style="left:1817px;top:1010px" width="15" height="16"><path d="M1,3 H6 L7,4.5 H14 V12 H1Z" fill="#e0e0e0"/></svg>
<svg style="left:1844px;top:1010px" width="15" height="16"><rect x="1.5" y="1.5" width="11" height="11" fill="none" stroke="#e0e0e0" stroke-width="1.4"/><path d="M7,4 V10 M4,7 H10" stroke="#e0e0e0" stroke-width="1.4"/></svg>
<svg style="left:1869px;top:1010px" width="15" height="16"><path d="M2,3 H12 M5,3 V1.5 H9 V3" fill="none" stroke="#e0e0e0" stroke-width="1.3"/><path d="M3,4.5 H11 L10.5,13.5 H3.5Z" fill="none" stroke="#e0e0e0" stroke-width="1.3"/><path d="M5.5,6 V12 M8.5,6 V12" stroke="#e0e0e0" stroke-width="1"/></svg>
<div class="a" style="left:8px;top:1030px;width:1903px;height:1px;background:#3a3636"></div>
<div class="a" style="left:8px;top:1031px;width:1903px;height:8px;background:linear-gradient(90deg,#efeadb 0%,#f2e6e2 5%,#f3e3e6 25%,#f0e2e8 40%,#e0e2f1 47%,#e4e2f0 53%,#ece2ee 60%,#efe2ee 80%,#ebe2f0 100%)"></div>
</body></html>
